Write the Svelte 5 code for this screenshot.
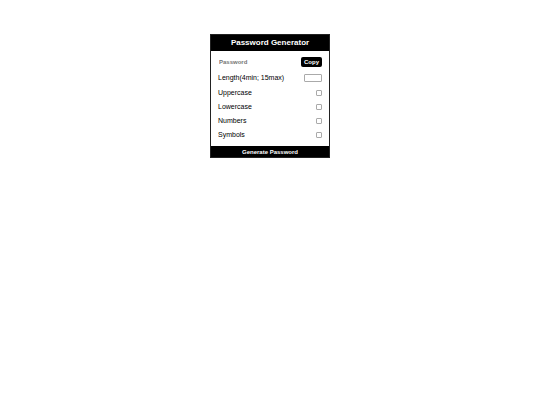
<script>
  let length = $state("");
  let password = $state("");

  let options = $state([
    { id: "uppercase", label: "Uppercase", chars: "ABCDEFGHIJKLMNOPQRSTUVWXYZ", checked: false },
    { id: "lowercase", label: "Lowercase", chars: "abcdefghijklmnopqrstuvwxyz", checked: false },
    { id: "numbers", label: "Numbers", chars: "0123456789", checked: false },
    { id: "symbols", label: "Symbols", chars: "!@#$%^&*()_+-=", checked: false }
  ]);

  function generate() {
    const pool = options.filter((o) => o.checked).map((o) => o.chars).join("");
    const size = Number(length);
    if (!pool || size < 4 || size > 15) return;

    let result = "";
    for (let i = 0; i < size; i++) {
      result += pool[Math.floor(Math.random() * pool.length)];
    }
    password = result;
  }

  function copy() {
    navigator.clipboard.writeText(password);
  }
</script>

<main class="generator">
  <h1>Password Generator</h1>

  <div class="settings">
    <div class="row result">
      <input class="password" type="text" placeholder="Password" aria-label="Password" readonly value={password} />
      <button class="copy" onclick={copy}>Copy</button>
    </div>

    <div class="row">
      <label for="length">Length(4min; 15max)</label>
      <input class="length" id="length" type="text" inputmode="numeric" bind:value={length} />
    </div>

    <div class="options">
      {#each options as option (option.id)}
        <div class="row">
          <label for={option.id}>{option.label}</label>
          <input class="check" id={option.id} type="checkbox" bind:checked={option.checked} />
        </div>
      {/each}
    </div>
  </div>

  <button class="generate" onclick={generate}>Generate Password</button>
</main>

<style>
  :global(body) { background: #fff; }

  .generator {
    box-sizing: border-box;
    width: 22%;
    min-width: 120px;
    margin: 34px auto 0;
    border: 1px solid #222;
    font-family: "Liberation Sans", Arial, sans-serif;
    font-size: 7px;
    color: #000;
  }

  h1 {
    margin: 0;
    padding: 4px 0;
    font-size: 8px;
    line-height: 8px;
    text-align: center;
    color: #fff;
    background: #000;
  }

  .settings { padding: 5px 7px 4px; }
  .row { display: flex; align-items: center; justify-content: space-between; height: 14px; }
  .result { height: 12px; margin-bottom: 3px; }
  .options { margin-top: 1px; }
  label { line-height: 8px; white-space: nowrap; }
  input, button { box-sizing: border-box; margin: 0; font-family: inherit; }

  .password {
    flex: 1;
    min-width: 0;
    padding: 0 1px;
    border: 0;
    outline: 0;
    font-size: 6px;
    font-weight: bold;
    background: transparent;
  }
  .password::placeholder { color: #757575; }

  button { border: 0; font-weight: bold; color: #fff; background: #000; cursor: pointer; }
  .copy { padding: 2px 3px; border-radius: 2px; font-size: 6px; line-height: 6px; }
  .length { width: 18px; height: 8px; padding: 0 1px; border: 1px solid #aaa; border-radius: 1px; font-size: 6px; }

  .check {
    appearance: none;
    width: 6px;
    height: 6px;
    border: 1px solid #aaa;
    border-radius: 1px;
    background: #fff;
  }
  .check:checked { background: #000; }

  .generate { display: block; width: 100%; padding: 3px 0 2px; font-size: 6px; line-height: 6px; }
</style>
